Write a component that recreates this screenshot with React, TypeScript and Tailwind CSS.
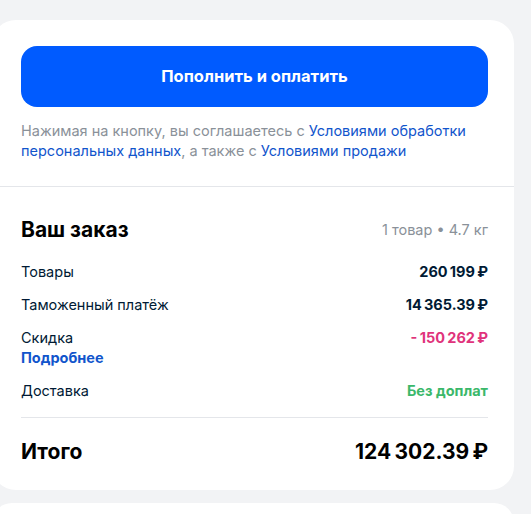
export default function App() {
  const rows = [
    { label: "Товары", value: "260\u2009199\u2009₽" },
    { label: "Таможенный платёж", value: "14\u2009365.39\u2009₽" },
  ];

  return (
    <div className="h-screen w-full overflow-hidden bg-[#f2f3f5] pt-[20px] font-['Inter',sans-serif]">
      <div className="ml-[-8px] w-[522px] rounded-[24px] bg-white">
        <div className="pl-[29px] pr-[26px] pt-[26px] pb-[25px]">
          <button className="h-[61px] w-full rounded-[16px] bg-[#005bff] text-[16.5px] font-bold text-white">
            Пополнить и оплатить
          </button>
          <p className="mt-[14px] text-[14.5px] leading-[20px] text-[#8a9199]">
            Нажимая на кнопку, вы соглашаетесь с{" "}
            <span className="text-[#1155cc]">Условиями обработки персональных данных</span>, а также с{" "}
            <span className="text-[#1155cc]">Условиями продажи</span>
          </p>
        </div>

        <div className="h-px bg-[#e4e6ea]" />

        <div className="pl-[29px] pr-[26px] pt-[27px] pb-[23px]">
          <div className="flex items-center justify-between">
            <h2 className="text-[21px] font-bold text-black">Ваш заказ</h2>
            <span className="text-[14.5px] text-[#8a9199]">1 товар • 4.7 кг</span>
          </div>

          <div className="mt-[16px] flex flex-col gap-[13px] text-[14.5px] text-[#001a34]">
            {rows.map((r) => (
              <div key={r.label} className="flex items-center justify-between leading-[20px]">
                <span>{r.label}</span>
                <span className="font-bold">{r.value}</span>
              </div>
            ))}
            <div className="flex justify-between">
              <div className="flex flex-col">
                <span className="leading-[20px]">Скидка</span>
                <span className="font-bold leading-[20px] text-[#1155cc]">Подробнее</span>
              </div>
              <span className="font-bold leading-[20px] text-[#e0337b]">-{"\u2009"}150{"\u2009"}262{"\u2009"}₽</span>
            </div>
            <div className="flex items-center justify-between leading-[20px]">
              <span>Доставка</span>
              <span className="font-bold text-[#3bb86a]">Без доплат</span>
            </div>
          </div>

          <div className="mt-[16px] h-px bg-[#e4e6ea]" />

          <div className="mt-[18px] flex items-center justify-between text-[21px] font-bold text-black">
            <span>Итого</span>
            <span>124{"\u2009"}302.39{"\u2009"}₽</span>
          </div>
        </div>
      </div>

      <div className="ml-[-8px] mt-[13px] h-[40px] w-[522px] rounded-[24px] bg-white" />
    </div>
  );
}
